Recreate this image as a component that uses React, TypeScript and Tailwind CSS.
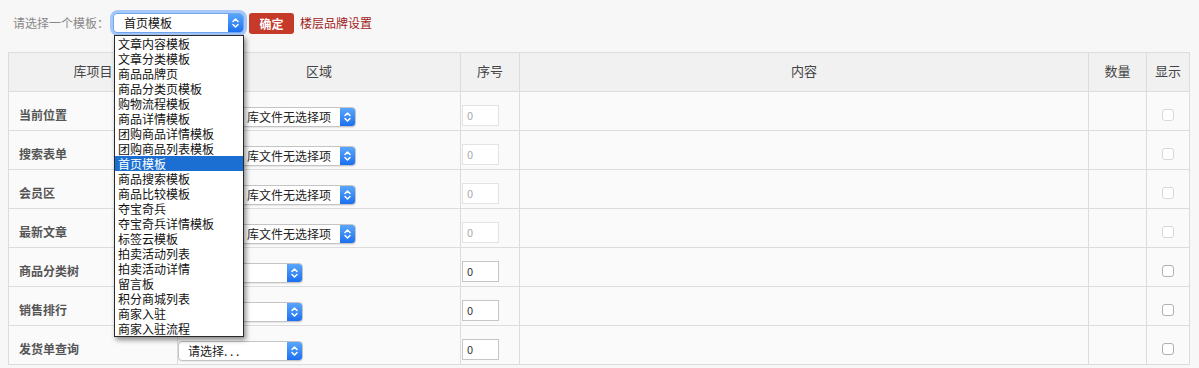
import React from "react";

const FONT = { fontFamily: '"Noto Sans CJK SC", "Noto Sans", sans-serif' };

function Arrows() {
  return (
    <svg width="9" height="12" viewBox="0 0 9 12" fill="none" stroke="white" strokeWidth="1.5" strokeLinecap="round" strokeLinejoin="round">
      <path d="M2 4.5 L4.5 2 L7 4.5" />
      <path d="M2 7.5 L4.5 10 L7 7.5" />
    </svg>
  );
}

function MacSelect({ text, width, indent }: { text: string; width: number; indent: number }) {
  return (
    <div
      className="inline-flex h-[20px] items-stretch rounded-[4px] border border-[#c4c4c4] bg-white shadow-[0_1px_1px_rgba(0,0,0,0.08)] align-middle"
      style={{ width }}
    >
      <div className="flex-1 overflow-hidden whitespace-nowrap text-[12px] leading-[18px] text-[#222]" style={{ paddingLeft: indent }}>
        {text}
      </div>
      <div className="flex w-[15px] items-center justify-center rounded-r-[3px] bg-gradient-to-b from-[#5aa6fb] to-[#1b6ff0]">
        <Arrows />
      </div>
    </div>
  );
}

const options = [
  "文章内容模板",
  "文章分类模板",
  "商品品牌页",
  "商品分类页模板",
  "购物流程模板",
  "商品详情模板",
  "团购商品详情模板",
  "团购商品列表模板",
  "首页模板",
  "商品搜索模板",
  "商品比较模板",
  "夺宝奇兵",
  "夺宝奇兵详情模板",
  "标签云模板",
  "拍卖活动列表",
  "拍卖活动详情",
  "留言板",
  "积分商城列表",
  "商家入驻",
  "商家入驻流程",
];

const rows = [
  { name: "当前位置", disabled: true },
  { name: "搜索表单", disabled: true },
  { name: "会员区", disabled: true },
  { name: "最新文章", disabled: true },
  { name: "商品分类树", disabled: false },
  { name: "销售排行", disabled: false },
  { name: "发货单查询", disabled: false },
];

export default function App() {
  return (
    <div className="relative min-h-[368px] w-[1199px] overflow-hidden bg-[#f7f7f7]" style={FONT}>
      <div className="flex h-[52px] items-start pl-[13px] pt-[13px]">
        <span className="mt-[1px] text-[12px] leading-[18px] text-[#888]">请选择一个模板：</span>
        <div className="relative ml-[4px]">
          <div className="rounded-[5px] shadow-[0_0_0_3px_rgba(100,160,250,0.55)]">
            <div className="flex h-[20px] w-[131px] items-stretch rounded-[4px] border border-[#6fa7f0] bg-white">
              <div className="flex-1 pl-[10px] text-[12px] leading-[18px] text-[#111]">首页模板</div>
              <div className="flex w-[15px] items-center justify-center rounded-r-[3px] bg-gradient-to-b from-[#5aa6fb] to-[#1b6ff0]">
                <Arrows />
              </div>
            </div>
          </div>
          <div className="absolute left-[1px] top-[22px] z-10 w-[130px] border border-[#2a2a2a] bg-white shadow-[2px_3px_5px_rgba(0,0,0,0.45)]">
            {options.map((o) =>
              o === "首页模板" ? (
                <div key={o} className="h-[15px] bg-[#1b6fd3] pl-[3px] text-[12px] leading-[15px] text-white">
                  {o}
                </div>
              ) : (
                <div key={o} className="h-[15px] pl-[3px] text-[12px] leading-[15px] text-[#111]">
                  {o}
                </div>
              )
            )}
          </div>
        </div>
        <button className="ml-[5px] h-[21px] w-[45px] rounded-[3px] bg-[#c63a2a] text-[12px] font-bold leading-[21px] text-white">
          确定
        </button>
        <a className="ml-[6px] mt-[1px] text-[12px] leading-[18px] text-[#a01c1c]">楼层品牌设置</a>
      </div>

      <table className="ml-[8px] w-[1181px] table-fixed border-collapse border border-[#dcdcdc]">
        <colgroup>
          <col className="w-[169px]" />
          <col className="w-[283px]" />
          <col className="w-[59px]" />
          <col className="w-[569px]" />
          <col className="w-[58px]" />
          <col className="w-[43px]" />
        </colgroup>
        <thead>
          <tr className="h-[39px] bg-[#f1f1f1]">
            {["库项目", "区域", "序号", "内容", "数量", "显示"].map((h) => (
              <th key={h} className="border border-[#dcdcdc] p-0 pb-[2px] text-center text-[13px] font-normal text-[#444]">
                {h}
              </th>
            ))}
          </tr>
        </thead>
        <tbody>
          {rows.map((r) => (
            <tr key={r.name} className="h-[39px] bg-[#fafafa]">
              <td className="border border-[#dcdcdc] pl-[10px] pt-[7px] text-[12px] font-bold text-[#555]">{r.name}</td>
              <td className="border border-[#dcdcdc] p-0 pt-[7px]">
                {r.disabled ? (
                  <MacSelect text="库文件无选择项" indent={68} width={178} />
                ) : (
                  <MacSelect text={r.name === "发货单查询" ? "请选择. . ." : ""} width={125} indent={9} />
                )}
              </td>
              <td className="border border-[#dcdcdc] p-0 pt-[9px]">
                <div
                  className={
                    r.disabled
                      ? "ml-[1px] h-[21px] w-[37px] border border-[#e3e3e3] bg-white pl-[4px] text-[11px] leading-[19px] text-[#aaa]"
                      : "ml-[1px] h-[21px] w-[37px] border border-[#c6c6c6] bg-white pl-[4px] text-[11px] leading-[19px] text-[#333]"
                  }
                >
                  0
                </div>
              </td>
              <td className="border border-[#dcdcdc]"></td>
              <td className="border border-[#dcdcdc]"></td>
              <td className="border border-[#dcdcdc] p-0 pt-[8px]">
                <div
                  className={
                    r.disabled
                      ? "mx-auto h-[12px] w-[12px] rounded-[3px] border border-[#d8d8d8] bg-white"
                      : "mx-auto h-[12px] w-[12px] rounded-[3px] border border-[#b0b0b0] bg-white"
                  }
                ></div>
              </td>
            </tr>
          ))}
        </tbody>
      </table>
    </div>
  );
}
